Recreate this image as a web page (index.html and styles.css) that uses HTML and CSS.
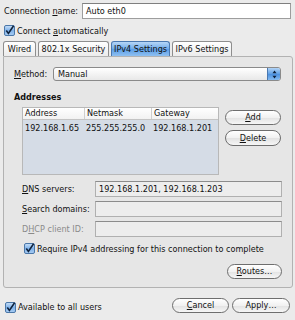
FILE: index.html
```html
<!DOCTYPE html>
<html>
<head>
<meta charset="utf-8">
<link rel="stylesheet" href="styles.css">
</head>
<body>
<div class="dialog">
  <div class="name-row">
    <span class="name-label">Connection <u>n</u>ame:</span>
    <div class="entry white">Auto eth0</div>
  </div>
  <div class="check-row top-check">
    <svg class="cb" width="11" height="11" viewBox="0 0 11 11"><defs><linearGradient id="g1" x1="0" y1="0" x2="0" y2="1"><stop offset="0" stop-color="#c9e0f8"/><stop offset="0.5" stop-color="#7fb2ea"/><stop offset="1" stop-color="#a9cdf3"/></linearGradient></defs><rect x="0.5" y="0.5" width="10" height="10" rx="1.5" fill="url(#g1)" stroke="#4b77a8"/><path d="M2.3 5.6 L4.4 8.4 L9.6 0.8" fill="none" stroke="#10233d" stroke-width="1.6"/></svg>
    <span>Connect <u>a</u>utomatically</span>
  </div>
  <div class="tabs">
    <div class="tab t-wired">Wired</div>
    <div class="tab t-sec">802.1x Security</div>
    <div class="tab t-v4 active">IPv4 Settings</div>
    <div class="tab t-v6">IPv6 Settings</div>
  </div>
  <div class="pane">
    <div class="method-row">
      <span class="method-label"><u>M</u>ethod:</span>
      <div class="combo">
        <span class="combo-text">Manual</span>
        <div class="stepper">
          <svg width="5" height="9" viewBox="0 0 5 9"><path d="M2.5 0.5 L4.5 3.2 L0.5 3.2 Z M2.5 8.5 L4.5 5.8 L0.5 5.8 Z" fill="#0d1f38"/></svg>
        </div>
      </div>
    </div>
    <div class="section-title">Addresses</div>
    <div class="addr-block">
      <div class="table">
        <div class="thead">
          <div class="c1">Address</div>
          <div class="c2">Netmask</div>
          <div class="c3">Gateway</div>
        </div>
        <div class="trow">
          <div class="c1">192.168.1.65</div>
          <div class="c2">255.255.255.0</div>
          <div class="c3">192.168.1.201</div>
        </div>
      </div>
      <div class="side-buttons">
        <div class="btn btn-add"><u>A</u>dd</div>
        <div class="btn btn-del"><u>D</u>elete</div>
      </div>
    </div>
    <div class="field-row dns-row">
      <span class="field-label"><u>D</u>NS servers:</span>
      <div class="entry grey">192.168.1.201, 192.168.1.203</div>
    </div>
    <div class="field-row">
      <span class="field-label"><u>S</u>earch domains:</span>
      <div class="entry grey"></div>
    </div>
    <div class="field-row">
      <span class="field-label disabled">D<u>H</u>CP client ID:</span>
      <div class="entry grey"></div>
    </div>
    <div class="check-row req-check">
      <svg class="cb" width="11" height="11" viewBox="0 0 11 11"><defs><linearGradient id="g2" x1="0" y1="0" x2="0" y2="1"><stop offset="0" stop-color="#c9e0f8"/><stop offset="0.5" stop-color="#7fb2ea"/><stop offset="1" stop-color="#a9cdf3"/></linearGradient></defs><rect x="0.5" y="0.5" width="10" height="10" rx="1.5" fill="url(#g2)" stroke="#4b77a8"/><path d="M2.3 5.6 L4.4 8.4 L9.6 0.8" fill="none" stroke="#10233d" stroke-width="1.6"/></svg>
      <span>Require IPv4 addressing for this connection to complete</span>
    </div>
    <div class="routes-row">
      <div class="btn btn-routes"><u>R</u>outes…</div>
    </div>
  </div>
  <div class="bottom-row">
    <div class="check-row bottom-check">
      <svg class="cb" width="11" height="11" viewBox="0 0 11 11"><defs><linearGradient id="g3" x1="0" y1="0" x2="0" y2="1"><stop offset="0" stop-color="#c9e0f8"/><stop offset="0.5" stop-color="#7fb2ea"/><stop offset="1" stop-color="#a9cdf3"/></linearGradient></defs><rect x="0.5" y="0.5" width="10" height="10" rx="1.5" fill="url(#g3)" stroke="#4b77a8"/><path d="M2.3 5.6 L4.4 8.4 L9.6 0.8" fill="none" stroke="#10233d" stroke-width="1.6"/></svg>
      <span>Available to all users</span>
    </div>
    <div class="dlg-buttons">
      <div class="btn btn-cancel"><u>C</u>ancel</div>
      <div class="btn btn-apply">Apply…</div>
    </div>
  </div>
</div>
</body>
</html>
```

FILE: styles.css
```css
* { box-sizing: border-box; }
html, body { margin: 0; padding: 0; }
body {
  background: #ebebeb;
  font-family: "DejaVu Sans Condensed", "DejaVu Sans", sans-serif;
  font-stretch: condensed;
  font-size: 9px;
  color: #111;
  width: 295px;
  height: 320px;
  overflow: hidden;
}
u { text-decoration: underline; text-underline-offset: 1px; }
.dialog { padding: 3px 0 0 0; }

.name-row { display: flex; align-items: center; height: 16px; padding-left: 4px; }
.name-label { width: 78px; }
.entry {
  height: 16px;
  border: 1px solid #9d9d9d;
  border-top-color: #7f7f7f;
  line-height: 14px;
  padding-left: 3px;
  white-space: nowrap;
}
.entry.white { background: #fff; width: 209px; }
.entry.grey { background: #ededed; width: 187px; border-color: #b0b0b0; border-top-color: #8c8c8c; }

.check-row { display: flex; align-items: center; height: 11px; }
.check-row .cb { flex: none; margin-right: 2px; }
.top-check { margin: 6px 0 0 4px; }

.tabs { display: flex; margin: 5px 0 0 3px; height: 15px; gap: 2px; }
.tab {
  height: 15px;
  border: 1px solid #8e8e8e;
  border-bottom: none;
  border-radius: 3px 3px 0 0;
  background: linear-gradient(#ffffff, #ececec);
  text-align: center;
  line-height: 14px;
}
.t-wired { width: 33px; }
.t-sec { width: 71px; }
.t-v4 { width: 59px; }
.t-v6 { width: 60px; }
.tab.active {
  background: linear-gradient(#b6d6f7, #6eaaea 50%, #5a9de6 51%, #8fc0f1);
  border-color: #4a78b0;
}

.pane {
  margin-left: 3px;
  width: 290px;
  height: 232px;
  border: 1px solid #b2b2b2;
  border-radius: 0 3px 3px 3px;
  background: #e6e6e6;
  padding: 10px 10px 0 10px;
}
.method-row { display: flex; align-items: center; height: 14px; }
.method-label { width: 39px; }
.combo {
  width: 228px;
  height: 14px;
  border: 1px solid #8a8a8a;
  border-radius: 3px;
  background: linear-gradient(#ffffff, #e8e8e8);
  display: flex;
  align-items: center;
  justify-content: space-between;
  padding-left: 4px;
  overflow: hidden;
}
.stepper {
  width: 13px;
  height: 12px;
  background: linear-gradient(#b3d4f6, #5d9ee5 50%, #4a90e0 51%, #86bbf0);
  border-left: 1px solid #4a78b0;
  display: flex;
  align-items: center;
  justify-content: center;
}
.section-title { font-weight: bold; margin-top: 11px; height: 10px; line-height: 10px; padding-left: 0; }
.addr-block { display: flex; margin: 5px 0 0 8px; gap: 6px; }
.table {
  width: 197px;
  height: 68px;
  border: 1px solid #b8b8b8;
  background: #d5dce6;
}
.thead {
  display: flex;
  background: linear-gradient(#ffffff, #f2f2f2);
  height: 12px;
  line-height: 11px;
  border-bottom: 1px solid #c4c4c4;
}
.thead .c2, .thead .c3 { border-left: 1px solid #cfcfcf; }
.trow { display: flex; height: 14px; line-height: 14px; margin-top: 1px; }
.c1 { width: 61px; padding-left: 2px; white-space: nowrap; }
.c2 { width: 67px; padding-left: 2px; white-space: nowrap; }
.c3 { flex: 1; padding-left: 2px; white-space: nowrap; }

.side-buttons { display: flex; flex-direction: column; gap: 5px; padding-top: 3px; }
.btn {
  height: 15px;
  border: 1px solid #6e6e6e;
  border-radius: 8px;
  background: linear-gradient(#ffffff, #f1f1f1 50%, #e2e2e2 51%, #f6f6f6);
  text-align: center;
  line-height: 13px;
  white-space: nowrap;
}
.btn-add, .btn-del { width: 56px; }
.btn-del { height: 16px; line-height: 14px; }

.field-row { display: flex; align-items: center; height: 15px; margin: 5px 0 0 8px; }
.dns-row { margin-top: 6px; }
.field-label { width: 73px; }
.field-label.disabled { color: #8a8a8a; }
.req-check { margin: 7px 0 0 10px; }
.routes-row { display: flex; justify-content: flex-end; margin-top: 10px; }
.btn-routes { width: 55px; }

.bottom-row { display: flex; align-items: center; justify-content: space-between; margin-top: 10px; height: 15px; padding: 0 5px 0 5px; }
.bottom-check { margin-top: 3px; }
.dlg-buttons { display: flex; gap: 3px; }
.btn-cancel { width: 57px; }
.btn-apply { width: 58px; }
```
